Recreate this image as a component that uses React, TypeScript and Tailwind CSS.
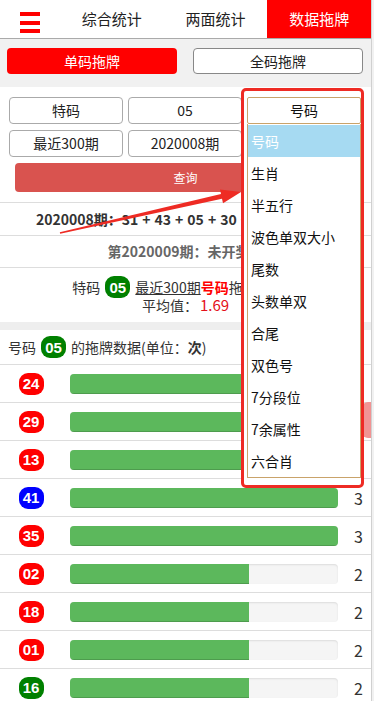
import React from 'react'

type BallColor = 'red' | 'blue' | 'green'

const BALL_BG: Record<BallColor, string> = {
  red: 'bg-[#ff0000]',
  blue: 'bg-[#0000ff]',
  green: 'bg-[#008000]',
}

// 拖牌数据
const ROWS: {num: string; color: BallColor; count: number}[] = [
  {num: '24', color: 'red', count: 3},
  {num: '29', color: 'red', count: 3},
  {num: '13', color: 'red', count: 3},
  {num: '41', color: 'blue', count: 3},
  {num: '35', color: 'red', count: 3},
  {num: '02', color: 'red', count: 2},
  {num: '18', color: 'red', count: 2},
  {num: '01', color: 'red', count: 2},
  {num: '16', color: 'green', count: 2},
  {num: '07', color: 'red', count: 2},
]
const MAX = 3

const LAST_DRAW = ['31', '43', '05', '30', '12', '46', '05']

const OPTIONS = ['号码', '生肖', '半五行', '波色单双大小', '尾数', '头数单双', '合尾', '双色号', '7分段位', '7余属性', '六合肖']

function Ball({num, color}: {num: string; color: BallColor}) {
  return (
    <span
      className={`inline-flex h-[22px] w-[25px] shrink-0 items-center justify-center rounded-[9px] ${BALL_BG[color]} font-['Liberation_Sans',sans-serif] text-[15px] font-bold leading-none text-white`}
    >
      {num}
    </span>
  )
}

export default function App() {
  return (
    <div className="relative flex h-[701px] w-[374px] overflow-hidden bg-white font-['Noto_Sans_CJK_SC',sans-serif] text-[14px] text-[#333]">
      <div className="relative w-[371px] shrink-0">
        {/* ヘッダー */}
        <div className="flex h-[39px] border-b border-[#aaa] bg-white">
          <div className="flex w-[60px] flex-col gap-[4.5px] pl-[20px] pt-[12px]">
            <span className="block h-[4px] w-[20px] bg-[#ff0000]" />
            <span className="block h-[4px] w-[20px] bg-[#ff0000]" />
            <span className="block h-[4px] w-[20px] bg-[#ff0000]" />
          </div>
          <div className="flex flex-1 items-center justify-center text-[15px] text-[#222]">综合统计</div>
          <div className="flex flex-1 items-center justify-center text-[15px] text-[#222]">两面统计</div>
          <div className="flex flex-1 items-center justify-center bg-[#ff0000] text-[15px] text-white">数据拖牌</div>
        </div>

        {/* 拖牌タブ */}
        <div className="grid grid-cols-2 gap-x-[16px] bg-[#f1f1f1] pb-[13px] pl-[7px] pr-[8px] pt-[9px]">
          <div className="flex h-[26px] items-center justify-center rounded-[4px] bg-[#ff0000] text-white">单码拖牌</div>
          <div className="flex h-[26px] items-center justify-center rounded-[4px] border border-[#888] bg-white text-[#222]">全码拖牌</div>
        </div>

        {/* 検索フォーム */}
        <div className="pt-[10px]">
          <div className="grid grid-cols-3 gap-x-[5px] gap-y-[6px] pl-[9px] pr-[10px]">
            <div className="flex h-[27px] items-center justify-center rounded-[4px] border border-[#aaa] text-[#222]">特码</div>
            <div className="flex h-[27px] items-center justify-center rounded-[4px] border border-[#aaa] text-[#222]">05</div>
            <div className="relative h-[27px]">
              {/* 注釈枠 */}
              <div className="absolute left-[-6px] top-[-9px] z-10 h-[400px] w-[123px] rounded-[5px] border-[3px] border-[#ee2b24] bg-white" />
              <div className="relative z-20 flex h-[27px] items-center justify-center rounded-[2px] border border-[#c9a36a] bg-white text-[#111]">
                号码
              </div>
              <div className="absolute left-0 top-full z-20 w-full border border-t-0 border-[#c9a36a] bg-white pt-[1px]">
                {OPTIONS.map((opt, i) => (
                  <div
                    key={opt}
                    className={`h-[32px] pl-[3px] leading-[32px] ${i === 0 ? 'bg-[#a6daf2] text-white' : 'text-[#111]'}`}
                  >
                    {opt}
                  </div>
                ))}
              </div>
            </div>
            <div className="flex h-[27px] items-center justify-center rounded-[4px] border border-[#aaa] text-[#222]">最近300期</div>
            <div className="flex h-[27px] items-center justify-center rounded-[4px] border border-[#aaa] text-[#222]">2020008期</div>
            <div className="flex h-[27px] items-center justify-center rounded-[4px] border border-[#aaa] text-[#222]">号码</div>
          </div>
          <div className="mx-[15px] mt-[6px] flex h-[29px] items-center justify-center rounded-[4px] bg-[#d9534f] text-[12px] text-white">
            查询
          </div>
        </div>

        {/* 開奖情報 */}
        <div className="mt-[10px] border-t border-[#ddd]">
          <div className="flex h-[33px] items-center justify-center overflow-hidden whitespace-nowrap border-b border-[#ddd] font-bold text-[#333]">
            <span>2020008期：</span>
            {LAST_DRAW.map((n, i) => (
              <React.Fragment key={i}>
                {i > 0 && <span className="px-[4px]">+</span>}
                <span>{n}</span>
              </React.Fragment>
            ))}
          </div>
          <div className="flex h-[32px] items-center justify-center whitespace-nowrap border-b border-[#ddd] font-bold text-[#666]">
            第2020009期：未开奖！
          </div>
          <div className="flex h-[54px] flex-col items-center pt-[8px] whitespace-nowrap">
            <div className="flex h-[22px] items-center gap-[5px]">
              <span>特码</span>
              <Ball num="05" color="green" />
              <span>
                <span className="underline">最近300期</span>
                <span className="font-bold text-[#ff0000]">号码</span>
                <span>拖牌数据：</span>
              </span>
            </div>
            <div className="mt-[-1px] leading-[16px]">
              平均值：<span className="ml-[2px] text-[15px] text-[#e4101a]">1.69</span>
            </div>
          </div>
        </div>

        <div className="h-[8px] bg-[#eee]" />

        {/* 拖牌データ */}
        <div className="flex h-[35px] items-center gap-[5px] border-b border-[#ddd] pl-[8px]">
          <span>号码</span>
          <Ball num="05" color="green" />
          <span>
            的拖牌数据(单位：<b>次</b>)
          </span>
        </div>
        {ROWS.map(row => (
          <div key={row.num} className="flex h-[38px] items-center border-b border-[#ddd]">
            <div className="flex w-[62px] justify-center">
              <Ball num={row.num} color={row.color} />
            </div>
            <div className="ml-[8px] h-[20px] flex-1 overflow-hidden rounded-[4px] bg-[#f5f5f5] shadow-[inset_0_1px_2px_rgba(0,0,0,0.1)]">
              <div
                className="h-full bg-[#5cb85c] shadow-[inset_0_-1px_0_rgba(0,0,0,0.15)]"
                style={{width: `${(row.count / MAX) * 100}%`}}
              />
            </div>
            <div className="w-[33px] pl-[8px] text-center text-[16px] text-[#333]">{row.count}</div>
          </div>
        ))}

        {/* 右端の浮きボタン */}
        <div className="absolute right-0 top-[402px] h-[36px] w-[9px] rounded-l-[6px] bg-[#f19494]" />

        {/* 注釈の矢印 */}
        <svg className="pointer-events-none absolute left-0 top-0 z-30" width="371" height="701">
          <polygon
            points="60.2,233.8 222,198.8 223,203.2 241,192 220,189.6 221,194 59.8,232.2"
            fill="#ee2b24"
          />
        </svg>
      </div>
      <div className="w-[3px] border-l border-[#d0d0d0] bg-[#f1f1f1]" />
    </div>
  )
}
